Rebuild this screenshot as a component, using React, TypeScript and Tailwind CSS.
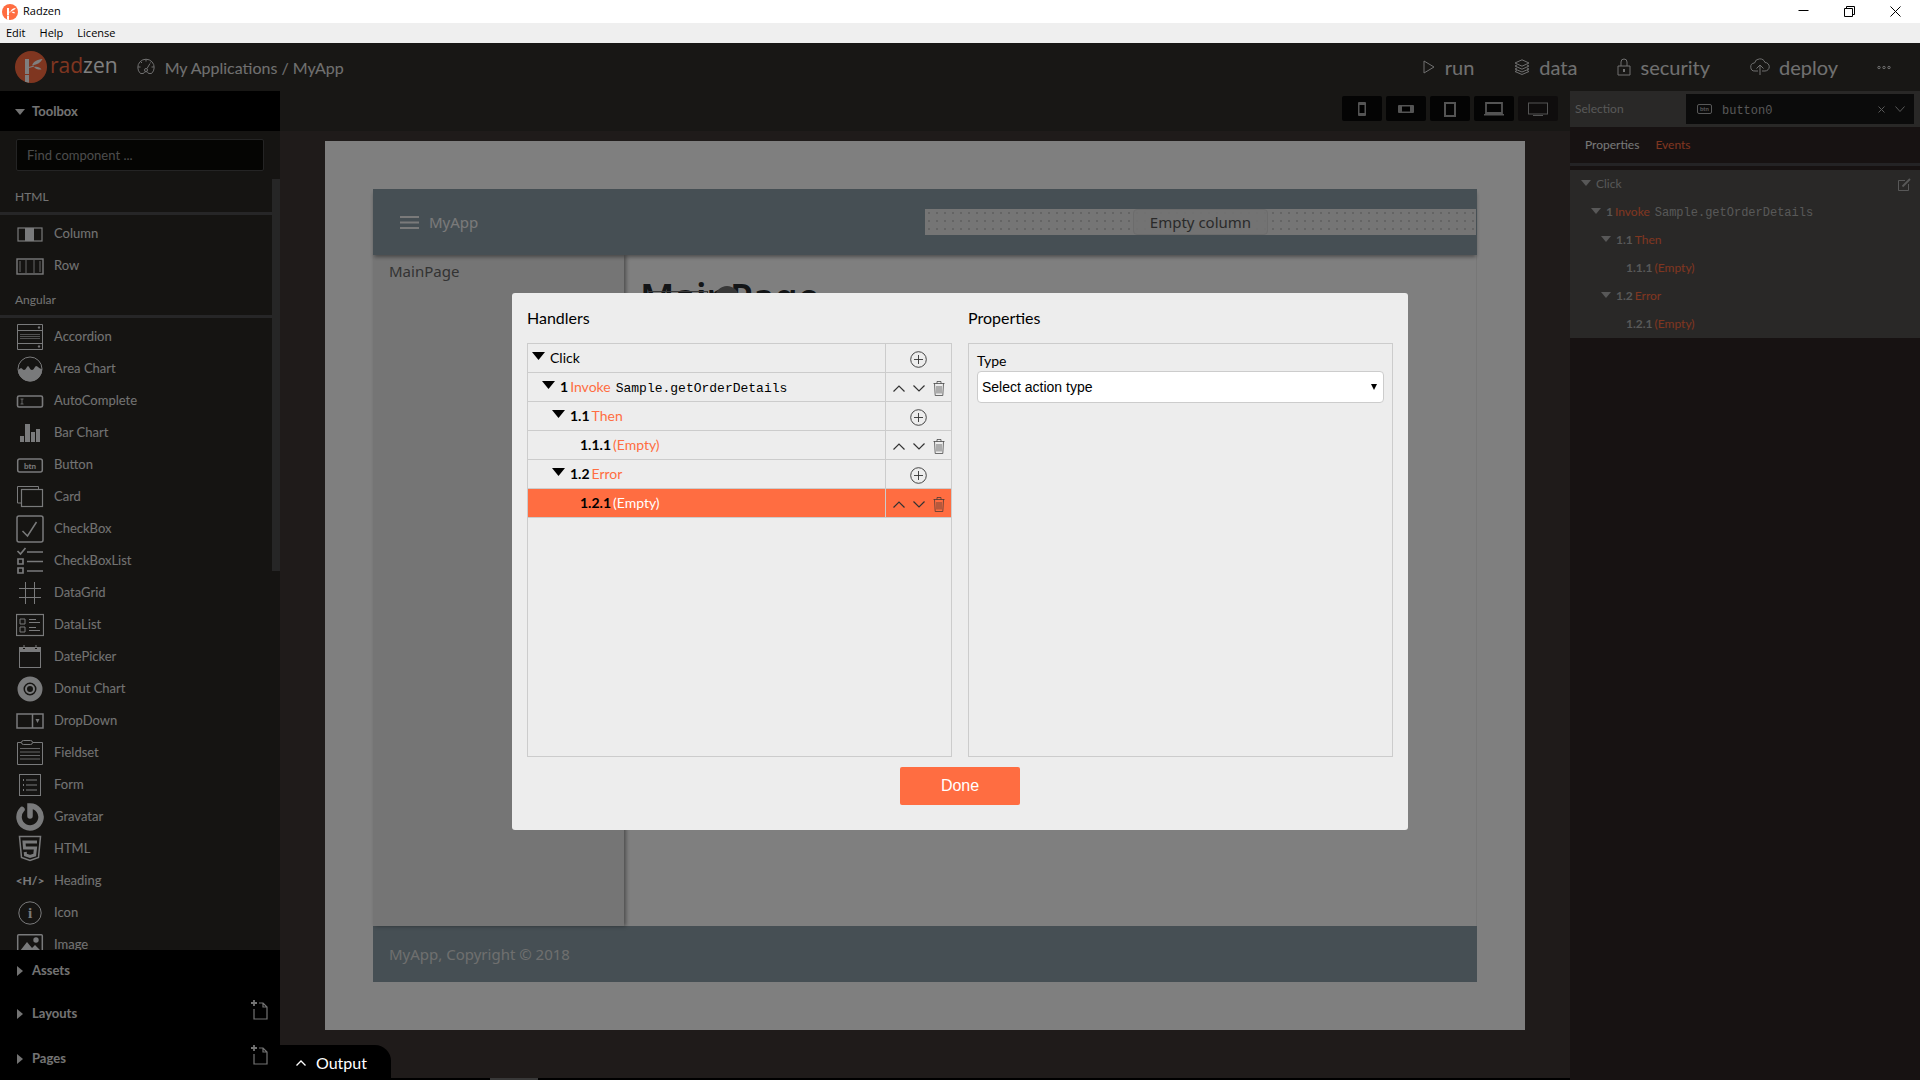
import React from 'react';

interface IconProps {
    name: string;
}

const iconShapes: Record<string, React.ReactNode> = {
    column: (
        <>
            <rect x="2" y="8" width="24" height="13" strokeWidth="1.2" />
            <rect x="9" y="8" width="9" height="13" fill="currentColor" stroke="none" />
        </>
    ),
    row: (
        <>
            <rect x="1" y="7" width="26" height="15" strokeWidth="1.4" />
            <path d="M10 8v13M18 8v13M4 9v11M24 9v11" strokeWidth="1" opacity=".8" />
        </>
    ),
    accordion: (
        <>
            <path d="M1.500 1.500h25v25h-25zM1.500 7.500h25M1.500 20.500h25" />
            <path d="M4 11.500h20M4 13.500h20M4 15.500h20" opacity=".6" />
            <path d="M22 5l1-1.500 1 1.500zM22 23l1 1.500 1-1.500z" fill="currentColor" />
        </>
    ),
    area: (
        <>
            <circle cx="14" cy="14" r="12" />
            <path d="M2 15l3-2c2 1 2 2 3 2 2 0 3-4 4-4s2 4 4 4 3-4 4-4c2 0 3 3 6 3a12 12 0 0 1-24 1z" fill="currentColor" stroke="none" />
        </>
    ),
    autocomplete: (
        <>
            <rect x="1.500" y="9" width="25" height="11" rx="1.500" strokeWidth="1.600" />
            <path d="M4.500 12h3M6 12v5M4.500 17h3" strokeWidth=".8" />
        </>
    ),
    bar: <path d="M4 17h4v6H4zM9 5h5v18H9zM15 13h4v10h-4zM20 10h4v13h-4z" fill="currentColor" stroke="none" />,
    button: (
        <>
            <rect x="1.700" y="8" width="24.600" height="13" rx="2" strokeWidth="1.500" />
            <text x="14" y="17.500" textAnchor="middle" fontSize="8" fontWeight="700" fill="currentColor" stroke="none">btn</text>
        </>
    ),
    card: (
        <>
            <path d="M5 20H1.500V3.500h21V6" />
            <rect x="5.500" y="6.500" width="21" height="17" strokeWidth="1.200" />
        </>
    ),
    checkbox: (
        <>
            <rect x="1" y="1" width="26" height="26" rx="2" strokeWidth="1.500" />
            <path d="M6.500 16l5 5 9-14" strokeWidth="1.500" />
        </>
    ),
    checklist: (
        <>
            <path d="M1.500 4l3 3 5-6" strokeWidth="1.700" />
            <path d="M2 12h5v5H2zM2 21h5v5H2z" strokeWidth="1.700" />
            <path d="M11 5h16M11 14.500h16M11 24h16" strokeWidth="1.500" />
        </>
    ),
    grid: <path d="M9.500 3v22M18.500 3v22M3 9.500h22M3 18.500h22" />,
    datalist: (
        <>
            <rect x=".5" y="3.500" width="27" height="21" strokeWidth="1.200" />
            <path d="M4 8h5v5H4zM4 16h5v5H4zM13 8.500h7M13 11.500h11M13 16.500h7M13 19.500h11" />
        </>
    ),
    date: (
        <>
            <rect x="3.500" y="4.500" width="21" height="20" />
            <path d="M3 4h4v2h2V4h10v2h2V4h4v5H3zM7.500 2h1v3h-1zM19.500 2h1v3h-1z" fill="currentColor" stroke="none" />
        </>
    ),
    donut: (
        <>
            <circle cx="14" cy="14" r="9.500" strokeWidth="6" />
            <circle cx="14" cy="14" r="4" strokeWidth="2" />
        </>
    ),
    dropdown: (
        <>
            <path d="M1 7h26v14H1zM16.500 7v14" strokeWidth="1.500" />
            <path d="M19.500 12h4l-2 4z" fill="currentColor" stroke="none" />
        </>
    ),
    fieldset: (
        <>
            <path d="M5 3.500H1.500v22h25v-22H17" />
            <rect x="5.500" y="1.500" width="11" height="4" rx="2" />
            <path d="M4 9.500h20M4 13h20M4 16.500h20M4 20h20" opacity=".8" />
        </>
    ),
    form: (
        <>
            <rect x="3.500" y="3.500" width="21" height="21" />
            <path d="M10 9h11M10 14h11M10 19h11" />
            <path d="M7 9h1M7 14h1M7 19h1" strokeWidth="2" />
        </>
    ),
    gravatar: <path d="M14 13V3a11 11 0 1 1-8 3.500" strokeWidth="5.500" strokeLinecap="round" />,
    html: (
        <>
            <path d="M3.500 1.500h21l-2 21-8.500 3-8.500-3z" strokeWidth="1.500" />
            <path d="M21 7H8l.5 6h11l-.8 7-4.700 1.500L9.500 20l-.3-3" strokeWidth="3" />
        </>
    ),
    heading: <text x="14" y="18" textAnchor="middle" fontSize="12" fontWeight="700" fill="currentColor" stroke="none">&lt;H/&gt;</text>,
    icon: (
        <>
            <circle cx="14" cy="14" r="11.200" />
            <text x="14" y="19" textAnchor="middle" fontSize="15" fontFamily="Liberation Serif" fontWeight="700" fill="currentColor" stroke="none">i</text>
        </>
    ),
    image: (
        <>
            <rect x="1.700" y="3.700" width="24.600" height="22" rx="1" strokeWidth="1.500" />
            <circle cx="20" cy="9" r="2.700" fill="currentColor" stroke="none" />
            <path d="M4 20l7-9 5 6 3-3 6 6v4H4z" fill="currentColor" stroke="none" />
        </>
    ),
};

const ToolIcon: React.FC<IconProps> = ({ name }) => (
    <svg className="h-7 w-7 shrink-0 text-gray-100" viewBox="0 0 28 28" fill="none" stroke="currentColor" aria-hidden="true">
        {iconShapes[name]}
    </svg>
);

const htmlItems = [
    { icon: 'column', label: 'Column' },
    { icon: 'row', label: 'Row' },
];

const angularItems = [
    { icon: 'accordion', label: 'Accordion' },
    { icon: 'area', label: 'Area Chart' },
    { icon: 'autocomplete', label: 'AutoComplete' },
    { icon: 'bar', label: 'Bar Chart' },
    { icon: 'button', label: 'Button' },
    { icon: 'card', label: 'Card' },
    { icon: 'checkbox', label: 'CheckBox' },
    { icon: 'checklist', label: 'CheckBoxList' },
    { icon: 'grid', label: 'DataGrid' },
    { icon: 'datalist', label: 'DataList' },
    { icon: 'date', label: 'DatePicker' },
    { icon: 'donut', label: 'Donut Chart' },
    { icon: 'dropdown', label: 'DropDown' },
    { icon: 'fieldset', label: 'Fieldset' },
    { icon: 'form', label: 'Form' },
    { icon: 'gravatar', label: 'Gravatar' },
    { icon: 'html', label: 'HTML' },
    { icon: 'heading', label: 'Heading' },
    { icon: 'icon', label: 'Icon' },
    { icon: 'image', label: 'Image' },
];

const handlers = [
    { num: '', label: 'Click', code: '', indent: 'pl-0', open: true, selected: false },
    { num: '1', label: 'Invoke', code: 'Sample.getOrderDetails', indent: 'pl-[10px]', open: true, selected: false },
    { num: '1.1', label: 'Then', code: '', indent: 'pl-[20px]', open: true, selected: false },
    { num: '1.1.1', label: '(Empty)', code: '', indent: 'pl-[30px]', open: false, selected: false },
    { num: '1.2', label: 'Error', code: '', indent: 'pl-[20px]', open: true, selected: false },
    { num: '1.2.1', label: '(Empty)', code: '', indent: 'pl-[30px]', open: false, selected: true },
];

const Logo = ({ className }: { className: string }) => (
    <svg className={className} viewBox="0 0 32 32" aria-hidden="true">
        <circle cx="16" cy="16" r="16" fill="#ff6d41" />
        <path d="M10 8h4v15h-4zM10 24h4v7.800l-4-1z" fill="#fff" />
        <path d="M17 14.500c1.500-4 5-6 10.500-6.500-1.500 3.500-5 5.500-10.500 6.500zM19 16c3-.8 6 .2 7.500 2.500-3 .4-5.500-.3-7.500-2.500z" fill="#fff" />
        <path d="M14 16.500l5-1.500" stroke="#fff" strokeWidth="1.200" />
    </svg>
);

const Triangle = ({ className }: { className: string }) => (
    <svg className={className} viewBox="0 0 12 8" fill="currentColor" preserveAspectRatio="none" aria-hidden="true">
        <path d="M0 0h12L6 8z" />
    </svg>
);

const TitleBar = () => (
    <div className="font-['Open_Sans',sans-serif] text-black">
        <div className="flex h-[23px] items-center bg-white pr-[2px] pl-[2px] text-[11px]">
            <Logo className="h-4 w-4" />
            <span className="ml-[5px] flex-1">Radzen</span>
            <button className="flex w-[46px] justify-center" aria-label="Minimize">
                <svg className="h-[11px] w-[11px]" viewBox="0 0 11 11" fill="none" stroke="currentColor"><path d="M.5 4.500h10" /></svg>
            </button>
            <button className="flex w-[46px] justify-center" aria-label="Restore">
                <svg className="h-[11px] w-[11px]" viewBox="0 0 11 11" fill="none" stroke="currentColor"><path d="M.5 2.500h8v8h-8zM2.500 2.500v-2h8v8h-2" /></svg>
            </button>
            <button className="flex w-[46px] justify-center" aria-label="Close">
                <svg className="h-[11px] w-[11px]" viewBox="0 0 11 11" fill="none" stroke="currentColor"><path d="M.5.5l10 10M10.500.5l-10 10" /></svg>
            </button>
        </div>
        <nav className="flex h-5 items-center gap-[14px] bg-[#efefef] pl-[6px] text-[11px]">
            <button>Edit</button>
            <button>Help</button>
            <button>License</button>
        </nav>
    </div>
);

const Header = () => (
    <header className="flex h-12 shrink-0 items-center bg-[#302e2a] pl-[15px] text-[#e0e0e0]">
        <Logo className="h-8 w-8" />
        <span className="ml-[3px] pb-1 font-['Open_Sans',sans-serif] text-[21px] leading-6 text-white">
            <span className="text-[#ff6d41]">rad</span>zen
        </span>
        <svg className="ml-[19px] h-[18px] w-[18px]" viewBox="0 0 18 18" fill="none" stroke="currentColor" aria-hidden="true">
            <path d="M3.500 15.500A8.200 8.200 0 1 1 14.500 15.500H11.500A2.600 2.600 0 0 0 6.500 15.500zM10 10.500l3-5M9 1v2.500M1 9h2.500M17 9h-2.500M3.500 3.500l1.500 1.500M14.500 3.500l-1 1" />
            <circle cx="9" cy="12" r="1.500" />
        </svg>
        <a href="#apps" className="ml-[10px] flex-1 pt-[2px] text-[16px]">My Applications / MyApp</a>
        <nav className="flex items-center text-[20px] leading-6">
            <button className="flex items-center gap-[10px]">
                <svg className="h-[14px] w-3" viewBox="0 0 12 14" fill="none" stroke="currentColor"><path d="M1 1l10 6-10 6z" /></svg>
                run
            </button>
            <button className="ml-[40px] flex items-center gap-[9px]">
                <svg className="h-4 w-4" viewBox="0 0 16 16" fill="none" stroke="currentColor"><path d="M8 .8l7 3.200-7 3.200L1 4zM3 6L1 7l7 3.200L15 7l-2-1M3 9l-2 1 7 3 7-3-2-1M3 11.500l-2 1 7 3 7-3-2-1" /></svg>
                data
            </button>
            <button className="ml-[40px] flex items-center gap-[9px]">
                <svg className="h-[18px] w-[14px]" viewBox="0 0 14 18" fill="none" stroke="currentColor"><path d="M1 8h12v9H1zM4 8V4a3 3 0 0 1 6 0v4" /><path d="M7 11v3" strokeWidth="2" /></svg>
                security
            </button>
            <button className="ml-[40px] flex items-center gap-[9px]">
                <svg className="h-[18px] w-5" viewBox="0 0 20 18" fill="none" stroke="currentColor"><path d="M8 13H5a4 4 0 0 1-.5-8 5.500 5.500 0 0 1 10.500-.5A4.200 4.200 0 0 1 15 13h-3M10 17V7M6.500 10.500L10 7l3.500 3.500" /></svg>
                deploy
            </button>
            <button className="mr-[29px] ml-[39px]" aria-label="More">
                <svg className="h-[5px] w-[14px]" viewBox="0 0 14 5" fill="none" stroke="currentColor"><circle cx="2" cy="2.500" r="1.200" /><circle cx="7" cy="2.500" r="1.200" /><circle cx="12" cy="2.500" r="1.200" /></svg>
            </button>
        </nav>
    </header>
);

const ToolList = ({ items }: { items: { icon: string; label: string }[] }) => (
    <ul className="pt-[3px]">
        {items.map((item) => (
            <li key={item.label} className="flex h-8 items-center gap-[10px] pl-4 text-[13px]">
                <ToolIcon name={item.icon} />
                {item.label}
            </li>
        ))}
    </ul>
);

const SideSection = ({ label, addable, tall }: { label: string; addable: boolean; tall: boolean }) => (
    <div className={tall ? 'flex h-[45px] items-center pl-[17px]' : 'flex h-10 items-center pl-[17px]'}>
        <button className="flex flex-1 items-center gap-[9px] pt-[2px] text-[13px] font-bold">
            <svg className="h-[10px] w-[6px]" viewBox="0 0 6 10" fill="currentColor"><path d="M0 0l6 5-6 5z" /></svg>
            {label}
        </button>
        {addable && (
            <button className="mr-3 mb-[6px]" aria-label={`Add to ${label}`}>
                <svg className="h-5 w-[18px]" viewBox="0 0 18 20" fill="none" stroke="currentColor" strokeWidth="1.200">
                    <path d="M4 9v10h13V7l-4-4H9M13 3v4h4" />
                    <path d="M4 0v6M1 3h6" strokeWidth="1.800" />
                </svg>
            </button>
        )}
    </div>
);

const Sidebar = () => (
    <aside className="flex w-[280px] shrink-0 flex-col bg-[#2a2824] text-[#e6e6e6]">
        <button className="flex h-10 shrink-0 items-center gap-[7px] bg-black pt-[2px] pl-[15px] text-[13px] font-bold">
            <Triangle className="h-[6px] w-[10px]" />
            Toolbox
        </button>
        <div className="shrink-0 px-4 py-2">
            <input
                type="text"
                aria-label="Find component"
                placeholder="Find component ..."
                className="h-8 w-full rounded-xs border border-[#484848] bg-[#0a0a06] px-[10px] text-[13px] placeholder:text-[#999]"
            />
        </div>
        <div className="flex min-h-0 flex-1">
            <div className="flex-1 overflow-hidden">
                <h3 className="flex h-9 items-center border-b-[3px] border-[#4c4c4e] pt-[3px] pl-[15px] text-[12px]">HTML</h3>
                <ToolList items={htmlItems} />
                <h3 className="flex h-9 items-center border-b-[3px] border-[#4c4c4e] pt-[3px] pl-[15px] text-[12px]">Angular</h3>
                <ToolList items={angularItems} />
            </div>
            <div className="h-[392px] w-2 bg-[#4c4c4c]" />
        </div>
        <div className="shrink-0 bg-black">
            <SideSection label="Assets" addable={false} tall={false} />
            <SideSection label="Layouts" addable tall />
            <SideSection label="Pages" addable tall />
        </div>
    </aside>
);

const devices = [
    { label: 'Phone portrait', shape: <><rect x="8" y="1" width="8" height="14" rx="1" fill="currentColor" stroke="none" /><path d="M9.500 4h5v8h-5z" fill="#000" stroke="none" /></> },
    { label: 'Phone landscape', shape: <><rect x="4" y="4" width="16" height="8" rx="1" fill="currentColor" stroke="none" /><path d="M8 5.500h8v5H8z" fill="#000" stroke="none" /></> },
    { label: 'Tablet', shape: <rect x="7" y="2" width="10" height="13" strokeWidth="2" /> },
    { label: 'Laptop', shape: <><path d="M4 2h16v10H4z" strokeWidth="1.800" /><path d="M2 13h20v1.500H2z" fill="currentColor" stroke="none" /></> },
    { label: 'Desktop', shape: <><rect x="2.500" y="2" width="19" height="11" /><path d="M7 14h10v1H7z" fill="currentColor" stroke="none" /></> },
];

const Designer = () => (
    <main className="flex min-w-0 flex-1 flex-col bg-[#3e3634]">
        <div className="flex h-10 shrink-0 items-center justify-end gap-1 bg-[#302e2a] pr-3 pb-[5px]">
            {devices.map((device, index) => (
                <button
                    key={device.label}
                    aria-label={device.label}
                    className={`flex h-[25px] w-10 items-center justify-center rounded-xs text-[#a8a8a8] ${index === 4 ? 'bg-[#1e1a1a]' : 'bg-[#080808]'}`}
                >
                    <svg className="h-4 w-6" viewBox="0 0 24 16" fill="none" stroke="currentColor">{device.shape}</svg>
                </button>
            ))}
        </div>
        <div className="flex flex-1 flex-col px-[45px] pt-[10px] pb-12">
            <div className="flex flex-1 bg-white p-12 font-['Noto_Sans',sans-serif] text-[15px]">
                <div className="flex flex-1 flex-col">
                    <div className="z-10 grid h-[66px] grid-cols-2 items-center bg-[#8c9ea8] text-[#f4f4f4] shadow-[0_3px_4px_-1px_rgba(0,0,0,0.4)]">
                        <div className="flex items-center gap-[10px] pl-[27px]">
                            <svg className="h-[13px] w-[19px]" viewBox="0 0 19 13" stroke="currentColor" strokeWidth="2"><path d="M0 1h19M0 6.500h19M0 12h19" /></svg>
                            MyApp
                        </div>
                        <div className="mr-[1px] flex h-[26px] justify-center bg-[#ebebeb] bg-[radial-gradient(circle,#c8c8c8_1px,transparent_1px)] bg-[size:8px_8px]">
                            <div className="flex w-[135px] items-center justify-center rounded-sm border border-[#d8d8d8] bg-[#e6e6e6]/90 text-[#555]">
                                Empty column
                            </div>
                        </div>
                    </div>
                    <div className="flex flex-1 border-r border-[#eee]">
                        <div className="z-1 w-[251px] bg-[#ebebeb] pt-[5px] pl-4 text-[#666] shadow-[2px_0_4px_rgba(0,0,0,0.4)]">MainPage</div>
                        <div className="relative flex-1 pt-4 pl-4">
                            <h1 className="text-[37px] leading-[52px] font-semibold text-[#262a2e]">MainPage</h1>
                            {/* Outline and drag handle of the selected component */}
                            <div className="absolute top-9 left-6 h-9 w-[60px] border border-[#707070]" />
                            <div className="absolute top-[31px] left-[91px] h-6 w-6 rounded-full bg-[#707070]" />
                        </div>
                    </div>
                    <div className="flex h-14 items-center bg-[#8c9ea8] pl-4 text-[#dedede]">MyApp, Copyright © 2018</div>
                </div>
            </div>
        </div>
        <div className="h-[2px] bg-black pl-[210px]">
            <div className="h-full w-12 bg-[#707070]" />
        </div>
    </main>
);

const EventsPanel = () => (
    <aside className="w-[350px] shrink-0 bg-[#2e2424] text-[12px] text-[#b0b0b0]">
        <div className="flex h-9 items-center bg-[#52504e] pr-[6px] pl-[5px]">
            <label htmlFor="selection" className="w-[111px]">Selection</label>
            <div className="flex h-[30px] flex-1 items-center gap-[10px] bg-[#161616] pl-[11px]">
                <svg className="h-[10px] w-[15px]" viewBox="0 0 15 10" fill="none" stroke="currentColor">
                    <rect x=".5" y=".5" width="14" height="9" rx="1.500" />
                    <text x="7.500" y="7" textAnchor="middle" fontSize="6" fontWeight="700" fill="currentColor" stroke="none">btn</text>
                </svg>
                <select id="selection" className="min-w-0 flex-1 appearance-none pt-[3px] font-['Liberation_Mono',monospace] text-[12px]">
                    <option>button0</option>
                </select>
                <button aria-label="Clear selection">
                    <svg className="h-[7px] w-[7px]" viewBox="0 0 7 7" stroke="currentColor"><path d="M.5.5l6 6M6.500.5l-6 6" /></svg>
                </button>
                <svg className="mr-[9px] h-[6px] w-[10px]" viewBox="0 0 10 6" fill="none" stroke="currentColor"><path d="M.5.5L5 5.500 9.500.5" /></svg>
            </div>
        </div>
        <div className="flex h-[39px] items-center gap-4 border-b-[3px] border-[#48464a] pl-[15px]">
            <button className="text-[#f0f0f0]">Properties</button>
            <button className="text-[#ff6d41]">Events</button>
        </div>
        <ul className="mt-1 bg-[#52504e]">
            {handlers.map((row) => (
                <li key={row.num} className="flex h-7 items-center pr-[9px] pl-[11px]">
                    <div className={`flex flex-1 items-center ${row.indent}`}>
                        {row.open ? <Triangle className="mb-[2px] h-[6px] w-[10px]" /> : <span className="w-[10px]" />}
                        {row.num && <b className="ml-[5px]">{row.num}</b>}
                        <span className={row.num ? 'ml-[2px] text-[#ff6d41]' : 'ml-[5px]'}>{row.label}</span>
                        {row.code && <code className="ml-[5px] pt-[2px] font-['Liberation_Mono',monospace] text-[12px]">{row.code}</code>}
                    </div>
                    {!row.num && (
                        <button aria-label="Edit handlers">
                            <svg className="h-[13px] w-[13px]" viewBox="0 0 13 13" fill="none" stroke="currentColor"><path d="M7 2.500H.5v10h10V6" /><path d="M4.500 8.500L12 1" strokeWidth="1.800" /></svg>
                        </button>
                    )}
                </li>
            ))}
        </ul>
    </aside>
);

const RowActions = ({ movable }: { movable: boolean }) => {
    if (!movable) {
        return (
            <button aria-label="Add handler">
                <svg className="h-[17px] w-[17px]" viewBox="0 0 17 17" fill="none" stroke="currentColor" strokeWidth=".9"><circle cx="8.500" cy="8.500" r="7.800" /><path d="M8.500 4v9M4 8.500h9" /></svg>
            </button>
        );
    }
    return (
        <>
            <button aria-label="Move up">
                <svg className="h-[7px] w-3" viewBox="0 0 12 7" fill="none" stroke="currentColor" strokeWidth="1.200"><path d="M.5 6.500L6 1l5.500 5.500" /></svg>
            </button>
            <button aria-label="Move down">
                <svg className="h-[7px] w-3" viewBox="0 0 12 7" fill="none" stroke="currentColor" strokeWidth="1.200"><path d="M.5.5L6 6l5.500-5.500" /></svg>
            </button>
            <button aria-label="Delete">
                <svg className="h-[15px] w-3" viewBox="0 0 12 15" fill="none" stroke="currentColor" strokeWidth=".7"><path d="M.5 2.500h11M4 2.500v-2h4v2M1.500 2.500l.7 12h7.600l.7-12M4 5v7.500M6 5v7.500M8 5v7.500" /></svg>
            </button>
        </>
    );
};

const HandlersDialog = () => (
    <div role="dialog" aria-label="Handlers" className="w-[896px] rounded-[3px] bg-[#ededed] px-[15px] pt-[15px] pb-[25px] text-black">
        <div className="grid grid-cols-2 gap-4">
            <section>
                <h2 className="text-[16px] leading-5">Handlers</h2>
                <ul className="mt-[15px] h-[414px] border border-[#ccc] text-[14px]">
                    {handlers.map((row) => (
                        <li key={row.num} className={`flex h-[29px] border-b border-[#ccc] ${row.selected ? 'bg-[#ff6d41]' : ''}`}>
                            <div className={`flex flex-1 items-center pb-[2px] ${row.indent}`}>
                                {row.open ? <Triangle className="mb-[2px] ml-1 h-2 w-[13px]" /> : <span className="ml-1 w-[13px]" />}
                                {row.num && <b className="ml-[5px]">{row.num}</b>}
                                <span className={row.num ? (row.selected ? 'ml-[2px] text-white' : 'ml-[2px] text-[#ff6d41]') : 'ml-[5px]'}>{row.label}</span>
                                {row.code && <code className="ml-[5px] pt-[5px] font-['Liberation_Mono',monospace] text-[13px]">{row.code}</code>}
                            </div>
                            <div className="flex w-[66px] items-center justify-center gap-2 border-l border-[#ccc] pt-[2px] text-[#333]">
                                <RowActions movable={row.code !== '' || !row.open} />
                            </div>
                        </li>
                    ))}
                </ul>
            </section>
            <section>
                <h2 className="text-[16px] leading-5">Properties</h2>
                <div className="mt-[15px] h-[414px] border border-[#ccc] px-2 pt-[7px] text-[14px]">
                    <label htmlFor="action-type" className="block leading-5">Type</label>
                    <div className="relative">
                        <select id="action-type" className="h-8 w-full appearance-none rounded-sm border border-[#ccc] bg-white px-1 font-['Liberation_Sans',sans-serif] text-[14px]">
                            <option>Select action type</option>
                        </select>
                        <Triangle className="pointer-events-none absolute top-[13px] right-[7px] h-[6px] w-[6px]" />
                    </div>
                </div>
            </section>
        </div>
        <div className="mt-[10px] flex justify-center">
            <button className="h-[38px] w-[120px] rounded-xs bg-[#ff6d41] font-['Liberation_Sans',sans-serif] text-[16px] text-white">Done</button>
        </div>
    </div>
);

export default function App() {
    return (
        <div className="flex h-screen flex-col overflow-hidden bg-white font-['Lato',sans-serif]">
            <TitleBar />
            <div className="relative flex min-h-0 flex-1 flex-col">
                <Header />
                <div className="flex min-h-0 flex-1">
                    <Sidebar />
                    <Designer />
                    <EventsPanel />
                </div>
                {/* Modal backdrop */}
                <div className="absolute inset-0 z-20 flex items-center justify-center bg-black/50">
                    <HandlersDialog />
                </div>
                {/* Output drawer handle, stays above the backdrop */}
                <button className="absolute bottom-[2px] left-[280px] z-30 flex h-[33px] w-[111px] items-center gap-[10px] rounded-tr-2xl bg-black pt-[2px] pl-4 text-[16px] text-white">
                    <svg className="h-[6px] w-[10px]" viewBox="0 0 10 6" fill="none" stroke="currentColor" strokeWidth="1.300"><path d="M.5 5.500L5 1l4.500 4.500" /></svg>
                    Output
                </button>
            </div>
        </div>
    );
}
